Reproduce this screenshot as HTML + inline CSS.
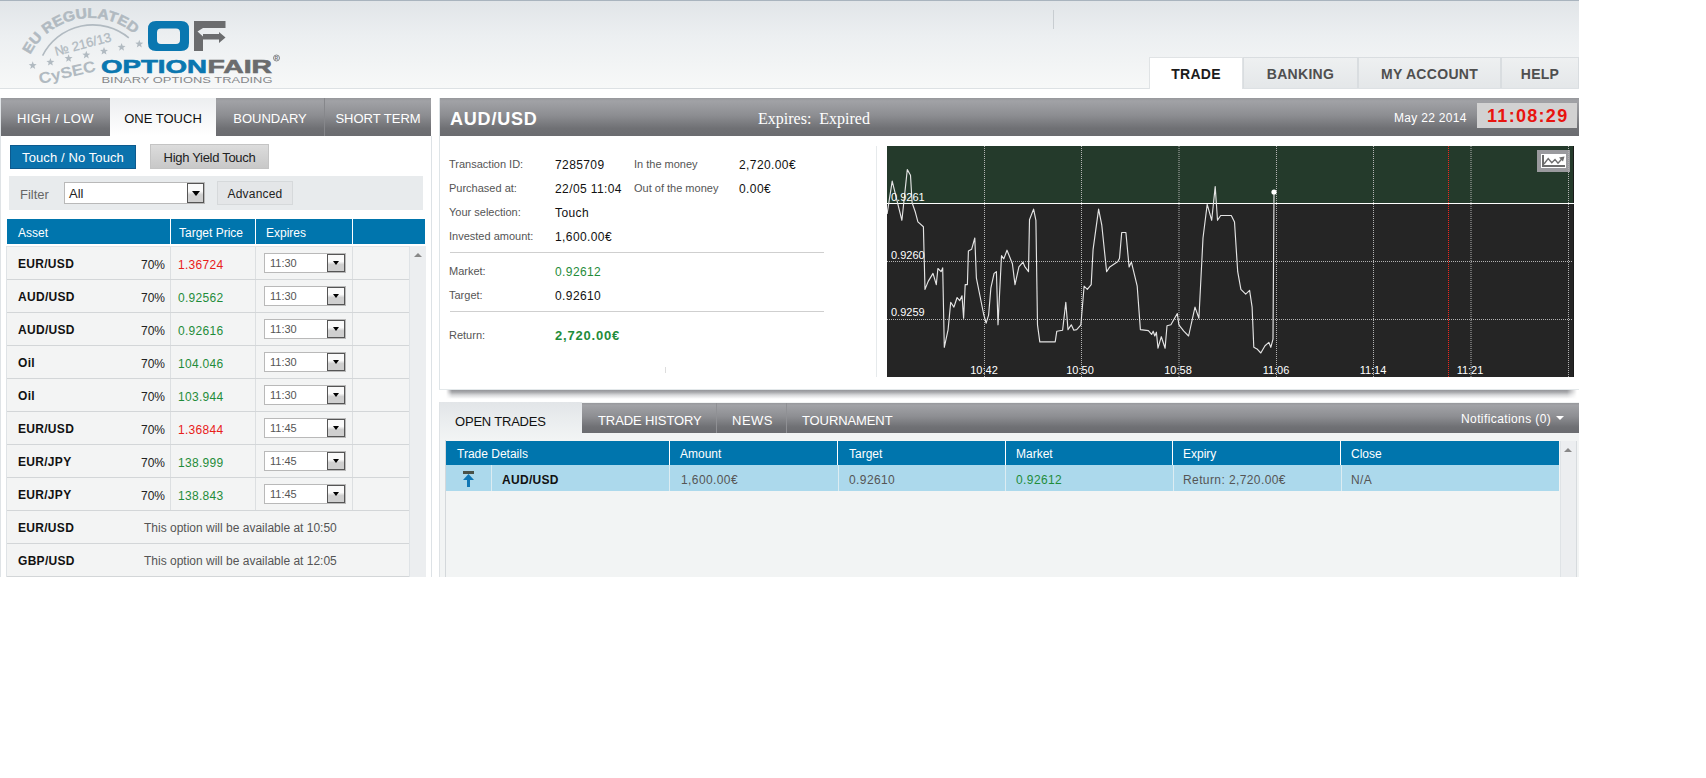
<!DOCTYPE html>
<html><head><meta charset="utf-8">
<style>
*{box-sizing:border-box;margin:0;padding:0}
html,body{width:1706px;height:778px;overflow:hidden;background:#fff;font-family:"Liberation Sans",sans-serif;}
.a{position:absolute}
.t{position:absolute;white-space:nowrap;line-height:1}
#hdr{left:0;top:0;width:1579px;height:89px;background:linear-gradient(#e1e5e8,#eceff1 40%,#f7f8f8);border-top:1px solid #a9b4be;border-bottom:1px solid #dde1e4}
.nav{top:57px;height:31px;background:linear-gradient(#eef0f1,#e4e7e9);border:1px solid #d9dde0;border-bottom:none;font-weight:bold;font-size:14px;color:#4f4f4f;text-align:center;line-height:33px;letter-spacing:0.3px}
.gtab{background:linear-gradient(#97989c,#a1a2a6 8%,#8d8e92 45%,#6f7074 80%,#6b6c70);color:#fff;font-size:13px;text-align:center;height:38px;line-height:41px;top:98px}
.blue{background:#0075ad}
.hd{color:#fff;font-size:12px;margin-top:1px}
.row{left:7px;width:402px;height:33px;background:#f3f4f4;border-bottom:1px solid #d3d6d8}
.sel{width:82px;height:20px;background:#fff;border:1px solid #b9b9b9}
.sel .b{position:absolute;right:0;top:0;width:18px;height:18px;border:1px solid #555;background:linear-gradient(#fafafa 40%,#cfcfcf 60%)}
.sel .b:after{content:"";position:absolute;left:4.5px;top:6px;border-left:3.5px solid transparent;border-right:3.5px solid transparent;border-top:4px solid #000}
.sel span{position:absolute;left:5px;top:3px;font-size:11px;color:#555}
.lb{left:449px;font-size:11px;color:#555}
.vl{left:555px;font-size:12px;color:#111;letter-spacing:0.4px}
.bv{top:474px;font-size:12px;color:#555;letter-spacing:0.4px}
</style></head><body>
<div id="hdr" class="a"></div>
<div class="a" style="left:1053px;top:10px;width:1px;height:19px;background:#c8cdd1"></div>
<div class="a nav" style="left:1149px;width:94px;height:32px;background:#fff;color:#1b1b1b;border-color:#e0e3e5">TRADE</div>
<div class="a nav" style="left:1243px;width:115px">BANKING</div>
<div class="a nav" style="left:1358px;width:143px">MY ACCOUNT</div>
<div class="a nav" style="left:1501px;width:78px">HELP</div>
<svg class="a" style="left:0;top:0" width="300" height="88" viewBox="0 0 300 88">
<defs><path id="arc1" d="M30.2,54.8 A67.6,67.6 0 0 1 139.0,38.5"/></defs>
<text font-family="Liberation Sans" font-weight="bold" font-size="14" fill="#b1bac1" stroke="#b1bac1" stroke-width="0.5"><textPath href="#arc1" textLength="122" lengthAdjust="spacingAndGlyphs">EU REGULATED</textPath></text>
<path d="M42.6,55.6 A56.3,56.3 0 0 1 128.8,37.9" fill="none" stroke="#b1bac1" stroke-width="1.6"/>
<text transform="translate(56,56) rotate(-15)" font-family="Liberation Sans" font-size="13" fill="#b1bac1" stroke="#b1bac1" stroke-width="0.3" textLength="58" lengthAdjust="spacingAndGlyphs">&#8470; 216/13</text>
<polygon points="32.70,61.30 33.74,64.07 36.69,64.20 34.38,66.05 35.17,68.90 32.70,67.26 30.23,68.90 31.02,66.05 28.71,64.20 31.66,64.07" fill="#b1bac1"/><polygon points="50.40,58.00 51.44,60.77 54.39,60.90 52.08,62.75 52.87,65.60 50.40,63.96 47.93,65.60 48.72,62.75 46.41,60.90 49.36,60.77" fill="#b1bac1"/><polygon points="68.60,54.20 69.64,56.97 72.59,57.10 70.28,58.95 71.07,61.80 68.60,60.16 66.13,61.80 66.92,58.95 64.61,57.10 67.56,56.97" fill="#b1bac1"/><polygon points="86.30,50.80 87.34,53.57 90.29,53.70 87.98,55.55 88.77,58.40 86.30,56.76 83.83,58.40 84.62,55.55 82.31,53.70 85.26,53.57" fill="#b1bac1"/><polygon points="104.00,47.00 105.04,49.77 107.99,49.90 105.68,51.75 106.47,54.60 104.00,52.96 101.53,54.60 102.32,51.75 100.01,49.90 102.96,49.77" fill="#b1bac1"/><polygon points="121.60,43.10 122.64,45.87 125.59,46.00 123.28,47.85 124.07,50.70 121.60,49.06 119.13,50.70 119.92,47.85 117.61,46.00 120.56,45.87" fill="#b1bac1"/><polygon points="139.30,39.80 140.34,42.57 143.29,42.70 140.98,44.55 141.77,47.40 139.30,45.76 136.83,47.40 137.62,44.55 135.31,42.70 138.26,42.57" fill="#b1bac1"/>
<text transform="translate(40,84) rotate(-13)" font-family="Liberation Sans" font-weight="bold" font-size="15.5" fill="#b1bac1" textLength="58" lengthAdjust="spacingAndGlyphs">CySEC</text>
<path fill-rule="evenodd" fill="#0a77b0" d="M156,21 H181 Q189,21 189,29 V43 Q189,51 181,51 H156 Q148,51 148,43 V29 Q148,21 156,21 Z M161,28.5 H176 Q180,28.5 180,32.5 V40 Q180,44 176,44 H161 Q157,44 157,40 V32.5 Q157,28.5 161,28.5 Z"/>
<path fill="#6b6c6e" d="M194,21 H225.5 V28 H203 L197.5,31.5 L203,36.5 V34 H219 V32 L225.5,37.5 L219,43 V39.5 H203 V51 H194 Z"/>
<text x="101" y="73.2" font-family="Liberation Sans" font-weight="bold" font-size="18.6" fill="#0a77b0" stroke="#0a77b0" stroke-width="0.6" textLength="106" lengthAdjust="spacingAndGlyphs">OPTION</text>
<text x="207.5" y="73.2" font-family="Liberation Sans" font-weight="bold" font-size="18.6" fill="#6b6c6e" stroke="#6b6c6e" stroke-width="0.6" textLength="64.5" lengthAdjust="spacingAndGlyphs">FAIR</text>
<circle cx="276.5" cy="58" r="3" fill="none" stroke="#6b6c6e" stroke-width="0.8"/><text x="274.8" y="59.8" font-family="Liberation Sans" font-size="4.5" font-weight="bold" fill="#6b6c6e">R</text>
<text x="101.5" y="82.8" font-family="Liberation Sans" font-size="8.4" fill="#85878a" textLength="171" lengthAdjust="spacingAndGlyphs">BINARY OPTIONS TRADING</text>
</svg>
<div class="a" style="left:0;top:98px;width:1px;height:479px;background:#dfe3e6"></div>
<div class="a" style="left:431px;top:136px;width:1px;height:441px;background:#dde2e6"></div>
<div class="a gtab" style="left:1px;width:109px;letter-spacing:0.4px">HIGH / LOW</div>
<div class="a gtab" style="left:110px;width:106px;background:linear-gradient(#eceef0,#fff);color:#111">ONE TOUCH</div>
<div class="a gtab" style="left:216px;width:108px">BOUNDARY</div>
<div class="a gtab" style="left:324px;width:1px;background:#86878b"></div>
<div class="a gtab" style="left:325px;width:106px">SHORT TERM</div>
<div class="a t" style="left:10px;top:145px;width:126px;height:24px;background:#0b72ac;border:1px solid #0d5a8e;color:#fff;font-size:13px;text-align:center;line-height:23px;letter-spacing:0.1px">Touch / No Touch</div>
<div class="a t" style="left:150px;top:144px;width:119px;height:25px;background:linear-gradient(#dcdcdc,#c8c8c8);border:1px solid #c4c4c4;color:#222;font-size:13px;text-align:center;line-height:25px;letter-spacing:-0.3px">High Yield Touch</div>
<div class="a" style="left:9px;top:176px;width:414px;height:34px;background:#e8ebed"></div>
<div class="t" style="left:20px;top:188px;font-size:13px;color:#666">Filter</div>
<div class="a" style="left:64px;top:182px;width:141px;height:22px;background:#fff;border:1px solid #b9b9b9"></div>
<div class="t" style="left:69px;top:187px;font-size:13px;color:#222">All</div>
<div class="a" style="left:187px;top:183px;width:17px;height:20px;border:1px solid #555;background:linear-gradient(#fafafa 40%,#d0d0d0 60%)"></div>
<div class="a" style="left:191.5px;top:191px;border-left:4px solid transparent;border-right:4px solid transparent;border-top:5px solid #000"></div>
<div class="a t" style="left:217px;top:181px;width:76px;height:24px;background:#e4e6e8;border:1px solid #d6d9db;color:#222;font-size:12px;text-align:center;line-height:25px;letter-spacing:0.2px">Advanced</div>
<div class="a blue" style="left:7px;top:219px;width:418px;height:25px"></div>
<div class="a" style="left:170px;top:219px;width:1px;height:25px;background:#fff"></div>
<div class="a" style="left:255px;top:219px;width:1px;height:25px;background:#fff"></div>
<div class="a" style="left:352px;top:219px;width:1px;height:25px;background:#fff"></div>
<div class="t hd" style="left:18px;top:226px">Asset</div>
<div class="t hd" style="left:179px;top:226px">Target Price</div>
<div class="t hd" style="left:266px;top:226px">Expires</div>
<div class="a" style="left:6px;top:246px;width:1px;height:331px;background:#dfe3e6"></div>
<div class="a" style="left:7px;top:246px;width:402px;height:1px;background:#e2e5e7"></div>
<div class="a row" style="top:247px"></div>
<div class="a" style="left:170px;top:247px;width:1px;height:32px;background:#dcdfe1"></div>
<div class="a" style="left:255px;top:247px;width:1px;height:32px;background:#dcdfe1"></div>
<div class="a" style="left:352px;top:247px;width:1px;height:32px;background:#dcdfe1"></div>
<div class="t" style="left:18px;top:258px;font-size:12px;font-weight:bold;color:#111;letter-spacing:0.3px">EUR/USD</div>
<div class="t" style="left:120px;width:45px;text-align:right;top:259px;font-size:12px;color:#222">70%</div>
<div class="t" style="left:178px;top:259px;font-size:12px;color:#e8201a;letter-spacing:0.3px">1.36724</div>
<div class="a sel" style="left:264px;top:253px"><span>11:30</span><div class="b"></div></div>
<div class="a row" style="top:280px"></div>
<div class="a" style="left:170px;top:280px;width:1px;height:32px;background:#dcdfe1"></div>
<div class="a" style="left:255px;top:280px;width:1px;height:32px;background:#dcdfe1"></div>
<div class="a" style="left:352px;top:280px;width:1px;height:32px;background:#dcdfe1"></div>
<div class="t" style="left:18px;top:291px;font-size:12px;font-weight:bold;color:#111;letter-spacing:0.3px">AUD/USD</div>
<div class="t" style="left:120px;width:45px;text-align:right;top:292px;font-size:12px;color:#222">70%</div>
<div class="t" style="left:178px;top:292px;font-size:12px;color:#1f8c3a;letter-spacing:0.3px">0.92562</div>
<div class="a sel" style="left:264px;top:286px"><span>11:30</span><div class="b"></div></div>
<div class="a row" style="top:313px"></div>
<div class="a" style="left:170px;top:313px;width:1px;height:32px;background:#dcdfe1"></div>
<div class="a" style="left:255px;top:313px;width:1px;height:32px;background:#dcdfe1"></div>
<div class="a" style="left:352px;top:313px;width:1px;height:32px;background:#dcdfe1"></div>
<div class="t" style="left:18px;top:324px;font-size:12px;font-weight:bold;color:#111;letter-spacing:0.3px">AUD/USD</div>
<div class="t" style="left:120px;width:45px;text-align:right;top:325px;font-size:12px;color:#222">70%</div>
<div class="t" style="left:178px;top:325px;font-size:12px;color:#1f8c3a;letter-spacing:0.3px">0.92616</div>
<div class="a sel" style="left:264px;top:319px"><span>11:30</span><div class="b"></div></div>
<div class="a row" style="top:346px"></div>
<div class="a" style="left:170px;top:346px;width:1px;height:32px;background:#dcdfe1"></div>
<div class="a" style="left:255px;top:346px;width:1px;height:32px;background:#dcdfe1"></div>
<div class="a" style="left:352px;top:346px;width:1px;height:32px;background:#dcdfe1"></div>
<div class="t" style="left:18px;top:357px;font-size:12px;font-weight:bold;color:#111;letter-spacing:0.3px">Oil</div>
<div class="t" style="left:120px;width:45px;text-align:right;top:358px;font-size:12px;color:#222">70%</div>
<div class="t" style="left:178px;top:358px;font-size:12px;color:#1f8c3a;letter-spacing:0.3px">104.046</div>
<div class="a sel" style="left:264px;top:352px"><span>11:30</span><div class="b"></div></div>
<div class="a row" style="top:379px"></div>
<div class="a" style="left:170px;top:379px;width:1px;height:32px;background:#dcdfe1"></div>
<div class="a" style="left:255px;top:379px;width:1px;height:32px;background:#dcdfe1"></div>
<div class="a" style="left:352px;top:379px;width:1px;height:32px;background:#dcdfe1"></div>
<div class="t" style="left:18px;top:390px;font-size:12px;font-weight:bold;color:#111;letter-spacing:0.3px">Oil</div>
<div class="t" style="left:120px;width:45px;text-align:right;top:391px;font-size:12px;color:#222">70%</div>
<div class="t" style="left:178px;top:391px;font-size:12px;color:#1f8c3a;letter-spacing:0.3px">103.944</div>
<div class="a sel" style="left:264px;top:385px"><span>11:30</span><div class="b"></div></div>
<div class="a row" style="top:412px"></div>
<div class="a" style="left:170px;top:412px;width:1px;height:32px;background:#dcdfe1"></div>
<div class="a" style="left:255px;top:412px;width:1px;height:32px;background:#dcdfe1"></div>
<div class="a" style="left:352px;top:412px;width:1px;height:32px;background:#dcdfe1"></div>
<div class="t" style="left:18px;top:423px;font-size:12px;font-weight:bold;color:#111;letter-spacing:0.3px">EUR/USD</div>
<div class="t" style="left:120px;width:45px;text-align:right;top:424px;font-size:12px;color:#222">70%</div>
<div class="t" style="left:178px;top:424px;font-size:12px;color:#e8201a;letter-spacing:0.3px">1.36844</div>
<div class="a sel" style="left:264px;top:418px"><span>11:45</span><div class="b"></div></div>
<div class="a row" style="top:445px"></div>
<div class="a" style="left:170px;top:445px;width:1px;height:32px;background:#dcdfe1"></div>
<div class="a" style="left:255px;top:445px;width:1px;height:32px;background:#dcdfe1"></div>
<div class="a" style="left:352px;top:445px;width:1px;height:32px;background:#dcdfe1"></div>
<div class="t" style="left:18px;top:456px;font-size:12px;font-weight:bold;color:#111;letter-spacing:0.3px">EUR/JPY</div>
<div class="t" style="left:120px;width:45px;text-align:right;top:457px;font-size:12px;color:#222">70%</div>
<div class="t" style="left:178px;top:457px;font-size:12px;color:#1f8c3a;letter-spacing:0.3px">138.999</div>
<div class="a sel" style="left:264px;top:451px"><span>11:45</span><div class="b"></div></div>
<div class="a row" style="top:478px"></div>
<div class="a" style="left:170px;top:478px;width:1px;height:32px;background:#dcdfe1"></div>
<div class="a" style="left:255px;top:478px;width:1px;height:32px;background:#dcdfe1"></div>
<div class="a" style="left:352px;top:478px;width:1px;height:32px;background:#dcdfe1"></div>
<div class="t" style="left:18px;top:489px;font-size:12px;font-weight:bold;color:#111;letter-spacing:0.3px">EUR/JPY</div>
<div class="t" style="left:120px;width:45px;text-align:right;top:490px;font-size:12px;color:#222">70%</div>
<div class="t" style="left:178px;top:490px;font-size:12px;color:#1f8c3a;letter-spacing:0.3px">138.843</div>
<div class="a sel" style="left:264px;top:484px"><span>11:45</span><div class="b"></div></div>
<div class="a row" style="top:511px"></div>
<div class="t" style="left:18px;top:522px;font-size:12px;font-weight:bold;color:#111;letter-spacing:0.3px">EUR/USD</div>
<div class="t" style="left:144px;top:522px;font-size:12px;color:#555">This option will be available at 10:50</div>
<div class="a row" style="top:544px"></div>
<div class="t" style="left:18px;top:555px;font-size:12px;font-weight:bold;color:#111;letter-spacing:0.3px">GBP/USD</div>
<div class="t" style="left:144px;top:555px;font-size:12px;color:#555">This option will be available at 12:05</div>
<div class="a" style="left:409px;top:246px;width:17px;height:331px;background:#eceef0;border-left:1px solid #dfe3e6"></div>
<div class="a" style="left:414px;top:253px;border-left:4px solid transparent;border-right:4px solid transparent;border-bottom:4px solid #888"></div>
<div class="a" style="left:439px;top:98px;width:1140px;height:292px;background:#fff;border-left:1px solid #dfe5e8;border-bottom:1px solid #e3e8ea"></div>
<div class="a" style="left:446px;top:390px;width:1131px;height:9px;background:linear-gradient(#95969a,#a9aaad 25%,#d6d7d9 55%,rgba(255,255,255,0));-webkit-mask-image:linear-gradient(to right,transparent,#000 6px,#000 1121px,transparent)"></div>
<div class="a" style="left:440px;top:98px;width:1139px;height:38px;background:linear-gradient(#97989c,#a1a2a6 8%,#8d8e92 45%,#6f7074 80%,#6b6c70)"></div>
<div class="t" style="left:450px;top:110px;font-size:18px;font-weight:bold;color:#fff;letter-spacing:0.8px">AUD/USD</div>
<div class="t" style="left:758px;top:111px;font-size:16px;font-family:'Liberation Serif',serif;color:#fff">Expires:&nbsp; Expired</div>
<div class="t" style="left:1394px;top:112px;font-size:12px;color:#fff;letter-spacing:0.3px">May 22 2014</div>
<div class="a" style="left:1477px;top:103px;width:100px;height:25px;background:#d2d2d2"></div>
<div class="t" style="left:1487px;top:107px;font-size:18px;font-weight:bold;color:#e8140f;letter-spacing:1.3px">11:08:29</div>
<div class="t lb" style="top:159px">Transaction ID:</div><div class="t vl" style="top:159px">7285709</div>
<div class="t lb" style="top:183px">Purchased at:</div><div class="t vl" style="top:183px">22/05 11:04</div>
<div class="t lb" style="top:207px">Your selection:</div><div class="t vl" style="top:207px">Touch</div>
<div class="t lb" style="top:231px">Invested amount:</div><div class="t vl" style="top:231px">1,600.00&euro;</div>
<div class="t lb" style="left:634px;top:159px">In the money</div><div class="t vl" style="left:739px;top:159px">2,720.00&euro;</div>
<div class="t lb" style="left:634px;top:183px">Out of the money</div><div class="t vl" style="left:739px;top:183px">0.00&euro;</div>
<div class="a" style="left:450px;top:252px;width:374px;height:1px;background:#cfcfcf"></div>
<div class="t lb" style="top:266px">Market:</div><div class="t vl" style="top:266px;color:#1f8c3a">0.92612</div>
<div class="t lb" style="top:290px">Target:</div><div class="t vl" style="top:290px">0.92610</div>
<div class="a" style="left:450px;top:311px;width:374px;height:1px;background:#cfcfcf"></div>
<div class="t lb" style="top:330px">Return:</div><div class="t vl" style="top:329px;font-weight:bold;font-size:13px;color:#1f8c3a;letter-spacing:0.8px">2,720.00&euro;</div>
<div class="a" style="left:665px;top:367px;width:1px;height:6px;background:#ddd"></div>
<div class="a" style="left:876px;top:146px;width:1px;height:231px;background:#e6eaec"></div>
<svg class="a" style="left:887px;top:146px" width="687" height="231" viewBox="0 0 687 231"><rect x="0" y="0" width="687" height="231" fill="#252525"/><rect x="0" y="0" width="687" height="57" fill="#243a2b"/><rect x="650" y="4" width="33" height="22" fill="#9a9a9e"/><rect x="654" y="8" width="25" height="14" fill="#fff"/><rect x="655" y="9" width="2" height="12" fill="#6d6d6d"/><rect x="655" y="19" width="23" height="2" fill="#6d6d6d"/><polyline points="657,18 661.2,12.599999999999994 664.8,16.80000000000001 668,13.599999999999994 671,17.19999999999999 675,12.800000000000011" fill="none" stroke="#6d6d6d" stroke-width="1.4"/><polygon points="677.5,10.5 672,11.5 676,15.5" fill="#6d6d6d"/><line x1="97.5" y1="0" x2="97.5" y2="231" stroke="#b4b4b4" stroke-width="1" stroke-dasharray="1,1"/><line x1="194.5" y1="0" x2="194.5" y2="231" stroke="#b4b4b4" stroke-width="1" stroke-dasharray="1,1"/><line x1="292.0" y1="0" x2="292.0" y2="231" stroke="#b4b4b4" stroke-width="1" stroke-dasharray="1,1"/><line x1="389.5" y1="0" x2="389.5" y2="231" stroke="#b4b4b4" stroke-width="1" stroke-dasharray="1,1"/><line x1="486.5" y1="0" x2="486.5" y2="231" stroke="#b4b4b4" stroke-width="1" stroke-dasharray="1,1"/><line x1="584.0" y1="0" x2="584.0" y2="231" stroke="#b4b4b4" stroke-width="1" stroke-dasharray="1,1"/><line x1="681.5" y1="0" x2="681.5" y2="231" stroke="#b4b4b4" stroke-width="1" stroke-dasharray="1,1"/><line x1="0" y1="115.5" x2="687" y2="115.5" stroke="#b4b4b4" stroke-width="1" stroke-dasharray="1,1"/><line x1="0" y1="173.5" x2="687" y2="173.5" stroke="#b4b4b4" stroke-width="1" stroke-dasharray="1,1"/><line x1="561.5" y1="0" x2="561.5" y2="231" stroke="#f0281c" stroke-width="1" stroke-dasharray="1,1"/><rect x="686" y="0" width="1" height="231" fill="#1a1a1a"/><line x1="0" y1="57.5" x2="687" y2="57.5" stroke="#ffffff" stroke-width="1"/><path d="M0.1,67.9 L5.2,35.1 L14.9,74.3 L20.3,23.6 L23.5,29.3 L25.1,56.7 L28.4,66.3 L30.9,75.9 L36.4,80.8 L38.0,143.4 L41.2,135.4 L46.0,127.4 L49.3,138.6 L50.9,122.5 L54.1,125.7 L55.7,121.9 L57.3,201.3 L61.1,183.6 L63.7,156.3 L66.9,161.1 L70.1,151.5 L72.7,154.7 L75.0,149.8 L76.6,172.3 L78.2,138.6 L80.4,138.6 L81.4,104.9 L84.6,103.3 L87.8,92.0 L89.4,132.2 L96.5,167.5 L99.1,177.2 L101.6,169.1 L103.9,141.8 L107.1,127.4 L109.4,125.7 L111.0,178.8 L114.5,109.7 L116.8,112.9 L120.0,104.2 L125.4,117.7 L128.0,138.6 L131.9,120.9 L136.0,116.1 L137.6,120.3 L141.5,125.7 L142.5,73.7 L146.6,63.1 L148.9,74.3 L150.5,178.8 L152.8,195.8 L168.2,195.8 L169.8,185.2 L175.6,184.2 L178.8,156.3 L181.0,183.6 L184.3,178.8 L186.8,184.2 L189.7,183.6 L193.9,178.8 L197.1,140.2 L200.3,143.4 L204.2,138.6 L206.1,103.3 L211.6,63.1 L214.8,79.2 L219.6,125.7 L222.8,120.9 L230.9,115.5 L232.5,112.3 L234.7,86.5 L238.9,86.5 L242.1,120.9 L244.4,116.1 L250.2,140.2 L253.4,183.6 L261.4,184.6 L264.6,188.4 L266.2,185.2 L267.8,190.0 L269.4,186.2 L271.0,202.2 L274.3,190.7 L278.1,202.2 L280.0,179.7 L283.9,178.8 L290.3,167.5 L291.9,178.8 L296.8,185.2 L301.6,190.0 L308.0,161.1 L311.9,172.3 L316.0,92.0 L320.2,58.3 L324.7,74.3 L328.2,40.6 L330.5,74.3 L333.7,69.5 L344.3,69.5 L347.5,76.0 L350.7,125.7 L353.9,143.4 L358.7,148.2 L362.6,144.4 L365.1,161.1 L366.8,201.3 L370.0,202.9 L373.8,207.0 L378.0,199.7 L381.9,196.4 L383.8,201.3 L386.0,193.2 L387.0,46.1" fill="none" stroke="#e4e4e4" stroke-width="1.15" stroke-linejoin="round"/><circle cx="387" cy="46" r="2.6" fill="#fff"/><text x="4" y="55" font-family="Liberation Sans" font-size="11" fill="#fff">0.9261</text><text x="4" y="113" font-family="Liberation Sans" font-size="11" fill="#fff">0.9260</text><text x="4" y="170" font-family="Liberation Sans" font-size="11" fill="#fff">0.9259</text><text x="97" y="228" text-anchor="middle" font-family="Liberation Sans" font-size="11" fill="#fff">10:42</text><text x="193" y="228" text-anchor="middle" font-family="Liberation Sans" font-size="11" fill="#fff">10:50</text><text x="291" y="228" text-anchor="middle" font-family="Liberation Sans" font-size="11" fill="#fff">10:58</text><text x="389" y="228" text-anchor="middle" font-family="Liberation Sans" font-size="11" fill="#fff">11:06</text><text x="486" y="228" text-anchor="middle" font-family="Liberation Sans" font-size="11" fill="#fff">11:14</text><text x="583" y="228" text-anchor="middle" font-family="Liberation Sans" font-size="11" fill="#fff">11:21</text></svg>
<div class="a" style="left:439px;top:402px;width:1140px;height:175px;background:#f2f4f4;border-left:1px solid #dfe3e6"></div>
<div class="a" style="left:440px;top:402px;width:142px;height:38px;background:linear-gradient(#e2e5e8,#eceff0 60%,#f2f4f4)"></div>
<div class="a" style="left:582px;top:403px;width:997px;height:30px;background:linear-gradient(#97989c,#a1a2a6 8%,#8d8e92 45%,#6f7074 80%,#6b6c70)"></div>
<div class="a" style="left:716px;top:403px;width:1px;height:30px;background:#8f9094"></div>
<div class="a" style="left:786px;top:403px;width:1px;height:30px;background:#8f9094"></div>
<div class="t" style="left:455px;top:415px;font-size:13px;color:#111;letter-spacing:-0.2px">OPEN TRADES</div>
<div class="t" style="left:598px;top:414px;font-size:13px;color:#fff;letter-spacing:-0.1px">TRADE HISTORY</div>
<div class="t" style="left:732px;top:414px;font-size:13px;color:#fff;letter-spacing:0.5px">NEWS</div>
<div class="t" style="left:802px;top:414px;font-size:13px;color:#fff;letter-spacing:-0.1px">TOURNAMENT</div>
<div class="t" style="left:1461px;top:413px;font-size:12px;color:#fff;letter-spacing:0.4px">Notifications (0)</div>
<div class="a" style="left:1556px;top:416px;border-left:4px solid transparent;border-right:4px solid transparent;border-top:4px solid #fff"></div>
<div class="a" style="left:445px;top:440px;width:1px;height:137px;background:#d4d8db"></div>
<div class="a blue" style="left:446px;top:441px;width:1113px;height:24px"></div>
<div class="a" style="left:669px;top:441px;width:1px;height:24px;background:#fff"></div>
<div class="a" style="left:837px;top:441px;width:1px;height:24px;background:#fff"></div>
<div class="a" style="left:1005px;top:441px;width:1px;height:24px;background:#fff"></div>
<div class="a" style="left:1172px;top:441px;width:1px;height:24px;background:#fff"></div>
<div class="a" style="left:1340px;top:441px;width:1px;height:24px;background:#fff"></div>
<div class="t hd" style="left:457px;top:447px">Trade Details</div>
<div class="t hd" style="left:680px;top:447px">Amount</div>
<div class="t hd" style="left:849px;top:447px">Target</div>
<div class="t hd" style="left:1016px;top:447px">Market</div>
<div class="t hd" style="left:1183px;top:447px">Expiry</div>
<div class="t hd" style="left:1351px;top:447px">Close</div>
<div class="a" style="left:446px;top:465px;width:1113px;height:26px;background:#acd9ec"></div>
<div class="a" style="left:491px;top:465px;width:1px;height:26px;background:#dcecf2"></div>
<div class="a" style="left:669px;top:465px;width:1px;height:26px;background:#dcecf2"></div>
<div class="a" style="left:838px;top:465px;width:1px;height:26px;background:#dcecf2"></div>
<div class="a" style="left:1005px;top:465px;width:1px;height:26px;background:#dcecf2"></div>
<div class="a" style="left:1173px;top:465px;width:1px;height:26px;background:#dcecf2"></div>
<div class="a" style="left:1341px;top:465px;width:1px;height:26px;background:#dcecf2"></div>
<svg class="a" style="left:462px;top:470px" width="13" height="17" viewBox="0 0 13 17"><rect x="1" y="1" width="11" height="3" fill="#4a5248"/><path d="M6.5 4 L12 10 L8 10 L8 17 L5 17 L5 10 L1 10 Z" fill="#0f77b5"/></svg>
<div class="t" style="left:502px;top:474px;font-size:12px;font-weight:bold;color:#111;letter-spacing:0.3px">AUD/USD</div>
<div class="t bv" style="left:681px">1,600.00&euro;</div>
<div class="t bv" style="left:849px">0.92610</div>
<div class="t bv" style="left:1016px;color:#1f8c3a">0.92612</div>
<div class="t bv" style="left:1183px">Return: 2,720.00&euro;</div>
<div class="t bv" style="left:1351px">N/A</div>
<div class="a" style="left:1560px;top:441px;width:17px;height:136px;background:#eceef0;border-left:1px solid #dfe3e6;border-right:1px solid #d7dbde"></div>
<div class="a" style="left:1564px;top:448px;border-left:4px solid transparent;border-right:4px solid transparent;border-bottom:4px solid #888"></div>
</body></html>
